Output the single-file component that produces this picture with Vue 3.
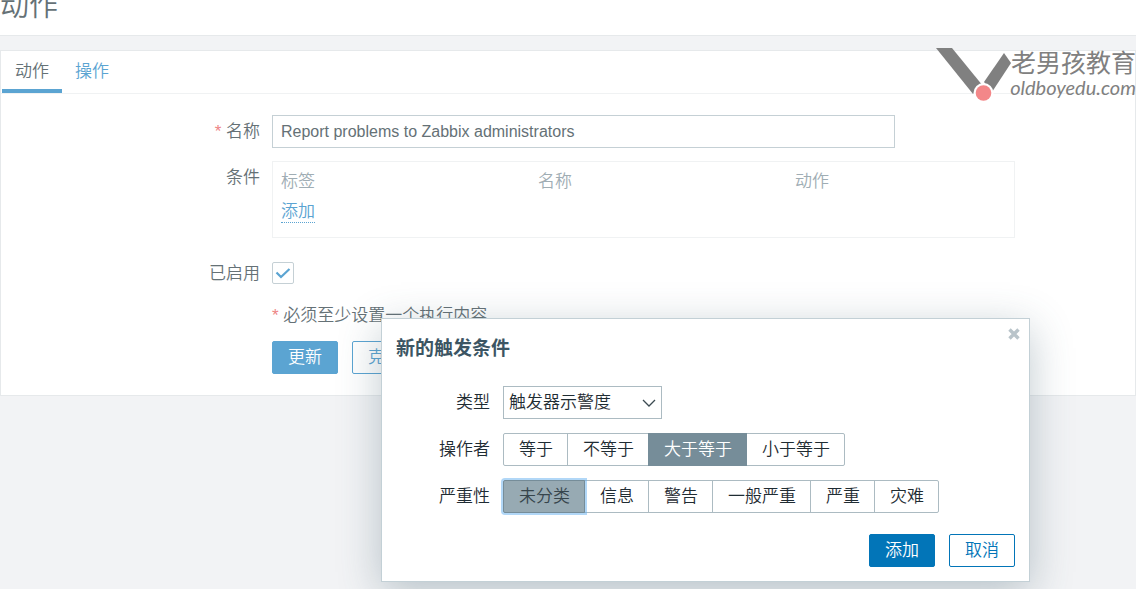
<script setup>
import { ref } from 'vue'

const name = ref('Report problems to Zabbix administrators')
const enabled = ref(true)
const type = ref('severity')
const operator = ref('大于等于')
const severity = ref('未分类')
const operators = ['等于', '不等于', '大于等于', '小于等于']
const severities = ['未分类', '信息', '警告', '一般严重', '严重', '灾难']
</script>

<template>
  <div class="page">
    <header class="page-head"><h1>动作</h1></header>

    <main class="card">
      <nav class="tabs">
        <a href="#action" class="tab active">动作</a>
        <a href="#operations" class="tab">操作</a>
      </nav>

      <form class="form" @submit.prevent>
        <label class="label" for="name"><span class="star">*</span> 名称</label>
        <input id="name" v-model="name" class="text-input" type="text" />

        <span id="cond-label" class="label top">条件</span>
        <div class="table-box">
          <table aria-labelledby="cond-label">
            <thead>
              <tr><th>标签</th><th>名称</th><th>动作</th></tr>
            </thead>
            <tbody>
              <tr><td colspan="3"><a href="#add" class="dotted">添加</a></td></tr>
            </tbody>
          </table>
        </div>

        <label class="label enabled" for="enabled">已启用</label>
        <div class="check enabled">
          <input id="enabled" v-model="enabled" type="checkbox" />
          <svg v-if="enabled" viewBox="0 0 22 22" aria-hidden="true">
            <path d="M4.5 10.5 9 15 17.5 7" fill="none" stroke="#5ba4d2" stroke-width="2.2" />
          </svg>
        </div>

        <p class="note"><span class="star">*</span> 必须至少设置一个执行内容</p>
        <div class="buttons">
          <button type="submit" class="btn soft">更新</button>
          <button type="button" class="btn soft-outline">克隆</button>
        </div>
      </form>
    </main>

    <div class="brand">
      <svg class="brand-mark" viewBox="0 0 76 54" aria-hidden="true">
        <path d="M0 0H16L47 38 37 46Z" fill="#808080" />
        <path d="M68 5 75 15 56 44 48 34Z" fill="#808080" />
        <circle cx="47.500" cy="45" r="10" fill="#fff" />
        <circle cx="47.500" cy="45" r="7.800" fill="#f38789" />
      </svg>
      <div class="brand-text">
        <span class="brand-cn">老男孩教育</span>
        <span class="brand-en">oldboyedu.com</span>
      </div>
    </div>

    <section class="dialog" role="dialog" aria-labelledby="dialog-title">
      <button type="button" class="close" aria-label="关闭">
        <svg viewBox="0 0 12 12" aria-hidden="true">
          <path d="M1.500 1.500 10.500 10.500M10.500 1.500 1.500 10.500" stroke="#b9c4ca" stroke-width="3.400" />
        </svg>
      </button>
      <h2 id="dialog-title">新的触发条件</h2>
      <div class="dialog-grid">
        <label for="type">类型</label>
        <div class="select-wrap">
          <select id="type" v-model="type">
            <option value="severity">触发器示警度</option>
          </select>
          <svg viewBox="0 0 14 8" aria-hidden="true">
            <path d="M1 1 7 7 13 1" fill="none" stroke="#3c4b52" stroke-width="1.300" />
          </svg>
        </div>

        <span id="op-label">操作者</span>
        <div class="segments" role="radiogroup" aria-labelledby="op-label">
          <label v-for="o in operators" :key="o" class="segment" :class="{ on: operator === o }">
            <input v-model="operator" type="radio" name="operator" :value="o" />{{ o }}
          </label>
        </div>

        <span id="sev-label">严重性</span>
        <div class="segments" role="radiogroup" aria-labelledby="sev-label">
          <label v-for="s in severities" :key="s" class="segment" :class="{ focused: severity === s }">
            <input v-model="severity" type="radio" name="severity" :value="s" />{{ s }}
          </label>
        </div>
      </div>
      <footer>
        <button type="button" class="btn primary">添加</button>
        <button type="button" class="btn outline">取消</button>
      </footer>
    </section>
  </div>
</template>

<style>
body {
  margin: 0;
  background: #f2f3f5;
}
</style>

<style scoped>
* {
  box-sizing: border-box;
}
.page {
  position: relative;
  min-height: 100vh;
  overflow: hidden;
  background: #f2f3f5;
  color: #657176;
  font: 350 17px/24px "Liberation Sans", "Noto Sans CJK SC", sans-serif;
}
.page-head {
  display: flex;
  align-items: flex-end;
  height: 36px;
  padding-bottom: 11px;
  background: #fff;
  border-bottom: 1px solid #e6e9eb;
}
h1 {
  margin: 0;
  font-size: 29px;
  font-weight: 350;
  line-height: 36px;
}
.card {
  margin-top: 14px;
  background: #fff;
  border: 1px solid #e6e9eb;
}
.tabs {
  display: flex;
  padding-left: 1px;
  border-bottom: 1px solid #f0f2f3;
}
.tab {
  height: 42px;
  padding: 9px 13px 0;
  color: #5ba4d2;
  text-decoration: none;
}
.tab.active {
  color: #657176;
  border-bottom: 4px solid #5ba4d2;
}
.form {
  display: grid;
  grid-template-columns: 259px minmax(0, 1fr);
  column-gap: 12px;
  padding: 21px 0;
}
.label {
  padding-top: 5px;
  text-align: right;
}
.star {
  color: #ee8585;
}
.text-input {
  width: 100%;
  max-width: 623px;
  height: 33px;
  padding: 0 8px;
  color: #657176;
  font: inherit;
  font-size: 16px;
  background: #fff;
  border: 1px solid #c5d0d5;
}
.label.top {
  margin-top: 13px;
}
.table-box {
  width: 100%;
  max-width: 743px;
  margin-top: 13px;
  padding: 4px 0 10px;
  border: 1px solid #f0f2f3;
}
table {
  width: 100%;
  table-layout: fixed;
  border-collapse: collapse;
}
th,
td {
  height: 31px;
  padding: 0 8px;
  font-weight: inherit;
  text-align: left;
}
td {
  height: 30px;
}
th {
  width: 257px;
  color: #a0adb4;
}
th:last-child {
  width: auto;
}
.dotted {
  display: inline-block;
  line-height: 21px;
  color: #5ba4d2;
  text-decoration: none;
  border-bottom: 1px dotted #5ba4d2;
}
.enabled {
  margin-top: 24px;
}
.label.enabled {
  padding: 0;
}
.check {
  position: relative;
  width: 22px;
  height: 22px;
}
.check input {
  display: block;
  width: 22px;
  height: 22px;
  margin: 0;
  appearance: none;
  background: #fff;
  border: 1px solid #c5d0d5;
  border-radius: 2px;
}
.check svg {
  position: absolute;
  inset: 0;
  pointer-events: none;
}
.note {
  grid-column: 2;
  margin: 18px 0 0;
}
.buttons {
  display: flex;
  gap: 14px;
  grid-column: 2;
  margin-top: 13px;
}
.btn {
  min-width: 66px;
  height: 33px;
  padding: 1px 15px 0;
  font: inherit;
  border: 1px solid #0275b8;
  border-radius: 2px;
}
.soft {
  color: #fff;
  background: #5ba4d2;
  border-color: #5ba4d2;
}
.soft-outline {
  color: #5ba4d2;
  background: #fff;
  border-color: #5ba4d2;
}
.primary {
  color: #fff;
  background: #0275b8;
}
.outline {
  color: #0275b8;
  background: #fff;
}
.brand {
  position: absolute;
  top: 48px;
  right: 0;
  display: flex;
  color: #808080;
}
.brand-mark {
  width: 76px;
  height: 54px;
}
.brand-text {
  display: flex;
  flex-direction: column;
  align-items: flex-end;
  width: 124px;
  white-space: nowrap;
}
.brand-cn {
  font-size: 25px;
  font-weight: 400;
  line-height: 31px;
}
.brand-en {
  font: italic 400 20px/16px Lato, sans-serif;
}
.dialog {
  position: absolute;
  top: 318px;
  left: 381px;
  width: 649px;
  padding: 18px 14px 14px;
  color: #1f2c33;
  background: #fff;
  border: 1px solid #c3d0d6;
  box-shadow: 0 10px 40px rgba(60, 90, 105, 0.32);
}
.close {
  position: absolute;
  top: 9px;
  right: 9px;
  width: 12px;
  height: 12px;
  padding: 0;
  background: none;
  border: 0;
}
.close svg {
  display: block;
}
h2 {
  margin: 0;
  color: #3c5563;
  font-size: 19px;
  font-weight: 700;
  line-height: 24px;
}
.dialog-grid {
  display: grid;
  grid-template-columns: 94px minmax(0, 1fr);
  gap: 14px 13px;
  align-items: center;
  margin-top: 25px;
}
.dialog-grid > label,
.dialog-grid > span {
  text-align: right;
}
.select-wrap {
  position: relative;
  width: 159px;
}
select {
  display: block;
  width: 100%;
  height: 33px;
  padding: 1px 5px 0;
  color: #1f2c33;
  font: inherit;
  appearance: none;
  background: #fff;
  border: 1px solid #acbbc2;
  border-radius: 0;
}
.select-wrap svg {
  position: absolute;
  top: 13px;
  right: 6px;
  width: 14px;
  height: 8px;
  pointer-events: none;
}
.segments {
  display: flex;
}
.segment {
  position: relative;
  height: 33px;
  padding: 0 14px 0 15px;
  line-height: 31px;
  border: 1px solid #acbbc2;
}
.segment + .segment {
  margin-left: -1px;
}
.segment:first-child {
  border-radius: 2px 0 0 2px;
}
.segment:last-child {
  border-radius: 0 2px 2px 0;
}
.segment input {
  position: absolute;
  inset: 0;
  margin: 0;
  opacity: 0;
}
.segment.on {
  z-index: 1;
  color: #fff;
  background: #768d99;
  border-color: #768d99;
}
.segment.focused {
  z-index: 1;
  color: #36454c;
  background: #97aab3;
  border-color: #768d99;
  box-shadow: 0 0 0 2px rgba(100, 175, 240, 0.5);
}
footer {
  display: flex;
  justify-content: flex-end;
  gap: 14px;
  margin-top: 21px;
}
</style>
